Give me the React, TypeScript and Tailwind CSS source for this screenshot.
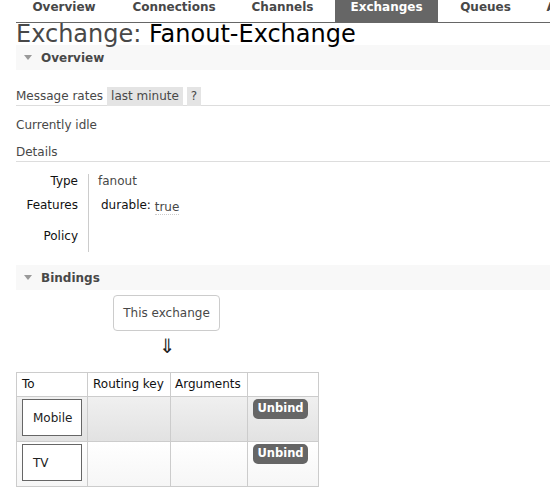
const font = { fontFamily: '"DejaVu Sans", Verdana, sans-serif' };

const tabs = [
  { name: 'Overview', w: 'w-[94px]' },
  { name: 'Connections', w: 'w-[112px]' },
  { name: 'Channels', w: 'w-[91px]' },
  { name: 'Exchanges', w: 'w-[103px]' },
  { name: 'Queues', w: 'w-[81px]' },
  { name: 'Admin', w: 'w-[70px]' },
];

const Nav = () => (
  <div className="ml-4 flex h-[23px] gap-[7px] border-b border-[#666] pl-px whitespace-nowrap overflow-hidden">
    {tabs.map((t) => (
      <div
        key={t.name}
        className={`${t.w} shrink-0 h-[22px] text-center text-[12px] font-bold leading-[15px] ${
          t.name === 'Exchanges' ? 'bg-[#666] text-white' : 'text-[#484848]'
        }`}
      >
        {t.name}
      </div>
    ))}
  </div>
);

const SectionHead = ({ title }: { title: string }) => (
  <div className="ml-4 flex h-[25px] items-center bg-[#f8f8f8] pl-2">
    <svg width="8" height="6" viewBox="0 0 8 6" className="mr-[9px]">
      <path d="M0 0 L8 0 L4 5 Z" fill="#999" />
    </svg>
    <span className="text-[12px] font-bold leading-[14px] text-[#484848]">{title}</span>
  </div>
);

const Detail = ({ label, children, h, pt }: { label: string; children?: React.ReactNode; h: string; pt: string }) => (
  <div className={`flex ${h} leading-[14px]`}>
    <div className={`w-[72px] pr-[10px] text-right text-[#111] ${pt}`}>{label}</div>
    <div className={`border-l border-[#ccc] pl-[9px] ${pt}`}>{children}</div>
  </div>
);

const Unbind = () => (
  <div className="ml-[5px] mt-[2px] flex h-[20px] w-[55px] items-center justify-center rounded-[5px] bg-[#666] text-[11.5px] font-bold text-white">
    Unbind
  </div>
);

const BindRow = ({ name, bg }: { name: string; bg: string }) => (
  <div className={`grid grid-cols-[71px_83px_77px_71px] h-[45px] border-t border-[#ccc] ${bg}`}>
    <div className="border-r border-[#ccc] pl-[5px] pt-[2px]">
      <div className="flex h-[37px] w-[60px] items-center border border-[#666] bg-white pl-[10px] text-[#222]">
        {name}
      </div>
    </div>
    <div className="border-r border-[#ccc]" />
    <div className="border-r border-[#ccc]" />
    <div>
      <Unbind />
    </div>
  </div>
);

export default function App() {
  return (
    <div className="h-[502px] w-[550px] overflow-hidden bg-white text-[12px] text-[#484848]" style={font}>
      <Nav />
      <h1 className="ml-4 h-[22px] text-[24px] leading-[22px] whitespace-nowrap text-[#484848]">
        Exchange: <span className="text-black">Fanout-Exchange</span>
      </h1>
      <SectionHead title="Overview" />

      <div className="ml-4 mt-[16px] flex h-[20px] items-start border-b border-[#ddd] leading-[15px]">
        <span className="mr-[4px] pt-[3px]">Message rates</span>
        <span className="mt-px h-[19px] bg-[#e4e4e4] px-[4px] pt-[2px]">last minute</span>
        <span className="ml-[4px] mt-px h-[19px] bg-[#e4e4e4] px-[4px] pt-[2px]">?</span>
      </div>

      <div className="ml-4 mt-[11px] leading-[16px]">Currently idle</div>
      <div className="ml-4 mt-[11px] h-[18px] border-b border-[#ddd] leading-[16px]">Details</div>

      <div className="ml-4 mt-[12px]">
        <Detail label="Type" h="h-[22px]" pt="pt-0">
          <span className="text-[#484848]">fanout</span>
        </Detail>
        <Detail label="Features" h="h-[30px]" pt="pt-[2px]">
          <span className="ml-[3px] text-[#111]">durable:</span>{' '}
          <span className="inline-block translate-y-[2px] border-b border-dotted border-[#ccc]">true</span>
        </Detail>
        <Detail label="Policy" h="h-[26px]" pt="pt-[3px]">
          <span />
        </Detail>
      </div>

      <div className="mt-[13px]">
        <SectionHead title="Bindings" />
      </div>

      <div className="ml-[113px] mt-[5px] flex h-[36px] w-[107px] items-center justify-center rounded-[4px] border border-[#ccc] text-[12px]">
        This exchange
      </div>
      <div className="ml-[159px] mt-[4px] h-[22px] text-[20px] leading-[22px] text-[#222]">⇓</div>

      <div className="ml-4 mt-[15px] w-[303px] border border-[#ccc]">
        <div className="grid grid-cols-[71px_83px_77px_71px] h-[23px] items-center text-[#111]">
          <div className="h-full border-r border-[#ccc] pl-[5px] leading-[23px]">To</div>
          <div className="h-full border-r border-[#ccc] pl-[5px] leading-[23px]">Routing key</div>
          <div className="h-full border-r border-[#ccc] pl-[4px] leading-[23px]">Arguments</div>
          <div />
        </div>
        <BindRow name="Mobile" bg="bg-gradient-to-b from-[#f0f0f0] to-[#e2e2e2]" />
        <BindRow name="TV" bg="bg-gradient-to-b from-white to-[#f6f6f6]" />
      </div>
    </div>
  );
}
